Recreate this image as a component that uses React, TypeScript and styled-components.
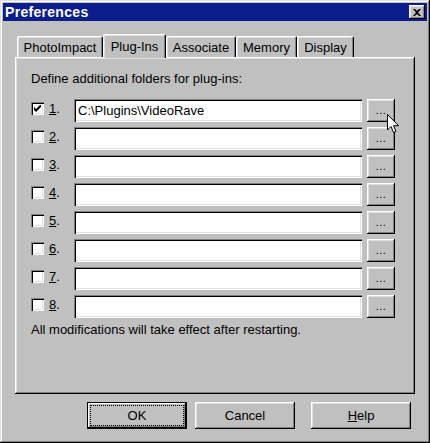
import React from "react";
import styled, { createGlobalStyle } from "styled-components";

const Global = createGlobalStyle`
  html, body { margin: 0; padding: 0; background: #c0c0c0; }
  body { font-family: "Liberation Sans", Arial, sans-serif; }
  * { box-sizing: border-box; }
`;

const Window = styled.div`
  position: relative;
  width: 430px;
  height: 443px;
  background: #c0c0c0;
  padding: 3px;
  box-shadow: inset -1px -1px #000, inset 1px 1px #dfdfdf,
    inset -2px -2px #808080, inset 2px 2px #fff;
  font-family: "Liberation Sans", Arial, sans-serif;
  font-size: 13px;
  color: #000;
`;

const TitleBar = styled.div`
  height: 18px;
  background: #0b1d8c;
  display: flex;
  align-items: center;
  justify-content: space-between;
  padding: 0 2px 0 2px;
`;

const Title = styled.span`
  color: #fff;
  font-weight: bold;
  font-size: 14px;
  letter-spacing: 0.3px;
  line-height: 18px;
`;

const CloseButton = styled.div`
  width: 16px;
  height: 14px;
  background: #c0c0c0;
  box-shadow: inset -1px -1px #000, inset 1px 1px #fff,
    inset -2px -2px #808080, inset 2px 2px #dfdfdf;
  display: flex;
  align-items: center;
  justify-content: center;
`;

const Body = styled.div`
  padding: 13px 12px 0 12px;
`;

const TabStrip = styled.div`
  display: flex;
  align-items: flex-end;
  height: 23px;
  padding-left: 2px;
  position: relative;
  z-index: 1;
`;

const Tab = styled.div<{ $w: number; $active?: boolean }>`
  width: ${(p) => p.$w}px;
  height: ${(p) => (p.$active ? 24 : 21)}px;
  margin-bottom: ${(p) => (p.$active ? -1 : 0)}px;
  align-self: flex-start;
  margin-top: ${(p) => (p.$active ? 0 : 2)}px;
  background: #c0c0c0;
  border-left: 1px solid #fff;
  border-top: 1px solid #fff;
  border-right: 1px solid #000;
  border-radius: 2px 2px 0 0;
  box-shadow: inset -1px 0 #808080, inset 1px 1px #dfdfdf;
  display: flex;
  justify-content: center;
  padding-top: ${(p) => (p.$active ? 4 : 3)}px;
  font-size: 13px;
  line-height: 15px;
  white-space: nowrap;
`;

const Panel = styled.div`
  width: 400px;
  height: 337px;
  background: #c0c0c0;
  box-shadow: inset -1px -1px #000, inset 1px 1px #fff,
    inset -2px -2px #808080, inset 2px 2px #dfdfdf;
  padding: 14px 0 0 16px;
`;

const Intro = styled.div`
  line-height: 15px;
  margin-bottom: 13px;
`;

const Rows = styled.div`
  display: flex;
  flex-direction: column;
  gap: 5px;
`;

const Row = styled.div`
  display: flex;
  align-items: flex-start;
  height: 23px;
`;

const CheckBox = styled.div`
  width: 13px;
  height: 13px;
  margin-top: 3px;
  background: #fff;
  box-shadow: inset 1px 1px #808080, inset 2px 2px #000,
    inset -1px -1px #fff, inset -2px -2px #dfdfdf;
  display: flex;
  align-items: center;
  justify-content: center;
`;

const Label = styled.span`
  width: 25px;
  margin-left: 5px;
  line-height: 15px;
  margin-top: 2px;
  color: #000;
`;

const TextBox = styled.div`
  width: 288px;
  height: 23px;
  background: #fff;
  box-shadow: inset 1px 1px #808080, inset 2px 2px #000,
    inset -1px -1px #fff, inset -2px -2px #dfdfdf;
  padding: 4px 0 0 4px;
  line-height: 15px;
  white-space: nowrap;
`;

const Browse = styled.div`
  width: 28px;
  height: 23px;
  margin-left: 5px;
  background: #c0c0c0;
  box-shadow: inset -1px -1px #000, inset 1px 1px #fff,
    inset -2px -2px #808080, inset 2px 2px #dfdfdf;
  display: flex;
  justify-content: center;
  padding-top: 6px;
  font-size: 11px;
  line-height: 11px;
  letter-spacing: 0.5px;
`;

const Note = styled.div`
  line-height: 15px;
  margin-top: 4px;
`;

const ButtonRow = styled.div`
  display: flex;
  padding-left: 72px;
  margin-top: 8px;
`;

const Button = styled.div<{ $gap: number; $default?: boolean }>`
  width: 100px;
  height: 27px;
  margin-left: ${(p) => p.$gap}px;
  background: #c0c0c0;
  box-shadow: ${(p) =>
    p.$default
      ? "inset -1px -1px #000, inset 1px 1px #000, inset -2px -2px #000, inset 2px 2px #fff, inset -3px -3px #808080"
      : "inset -1px -1px #000, inset 1px 1px #fff, inset -2px -2px #808080, inset 2px 2px #dfdfdf"};
  display: flex;
  align-items: center;
  justify-content: center;
  padding: 3px;
`;

const Focus = styled.div`
  flex: 1;
  align-self: stretch;
  border: 1px dotted #000;
  display: flex;
  align-items: center;
  justify-content: center;
`;

const Cursor = styled.svg`
  position: absolute;
  left: 387px;
  top: 114px;
`;

const tabs = [
  { name: "PhotoImpact", w: 86 },
  { name: "Plug-Ins", w: 63, active: true },
  { name: "Associate", w: 70 },
  { name: "Memory", w: 61 },
  { name: "Display", w: 57 },
];

const folders = ["C:\\Plugins\\VideoRave", "", "", "", "", "", "", ""];

export default function App() {
  return (
    <>
      <Global />
      <Window>
        <TitleBar>
          <Title>Preferences</Title>
          <CloseButton>
            <svg width="8" height="7" viewBox="0 0 8 7">
              <path d="M0 0h2l2 2 2-2h2L5 3.5 8 7H6L4 5 2 7H0l3-3.5z" fill="#000" />
            </svg>
          </CloseButton>
        </TitleBar>
        <Body>
          <TabStrip>
            {tabs.map((t) => (
              <Tab key={t.name} $w={t.w} $active={t.active}>
                {t.name}
              </Tab>
            ))}
          </TabStrip>
          <Panel>
            <Intro>Define additional folders for plug-ins:</Intro>
            <Rows>
              {folders.map((f, i) => (
                <Row key={i}>
                  <CheckBox>
                    {i === 0 && (
                      <svg width="7" height="7" viewBox="0 0 7 7">
                        <path d="M0 2v3l2 2 5-5V-1L2 4z" fill="#000" />
                      </svg>
                    )}
                  </CheckBox>
                  <Label>
                    <u>{i + 1}</u>.
                  </Label>
                  <TextBox>{f}</TextBox>
                  <Browse>...</Browse>
                </Row>
              ))}
            </Rows>
            <Note>All modifications will take effect after restarting.</Note>
          </Panel>
          <ButtonRow>
            <Button $gap={0} $default>
              <Focus>OK</Focus>
            </Button>
            <Button $gap={8}>Cancel</Button>
            <Button $gap={16}>
              <span>
                <u>H</u>elp
              </span>
            </Button>
          </ButtonRow>
        </Body>
        <Cursor width="13" height="20" viewBox="0 0 13 20">
          <path
            d="M0.5 0.5v15.5l3.5-3.5 2.5 6 2.5-1-2.5-5.8h5z"
            fill="#fff"
            stroke="#000"
            strokeWidth="1"
          />
        </Cursor>
      </Window>
    </>
  );
}
